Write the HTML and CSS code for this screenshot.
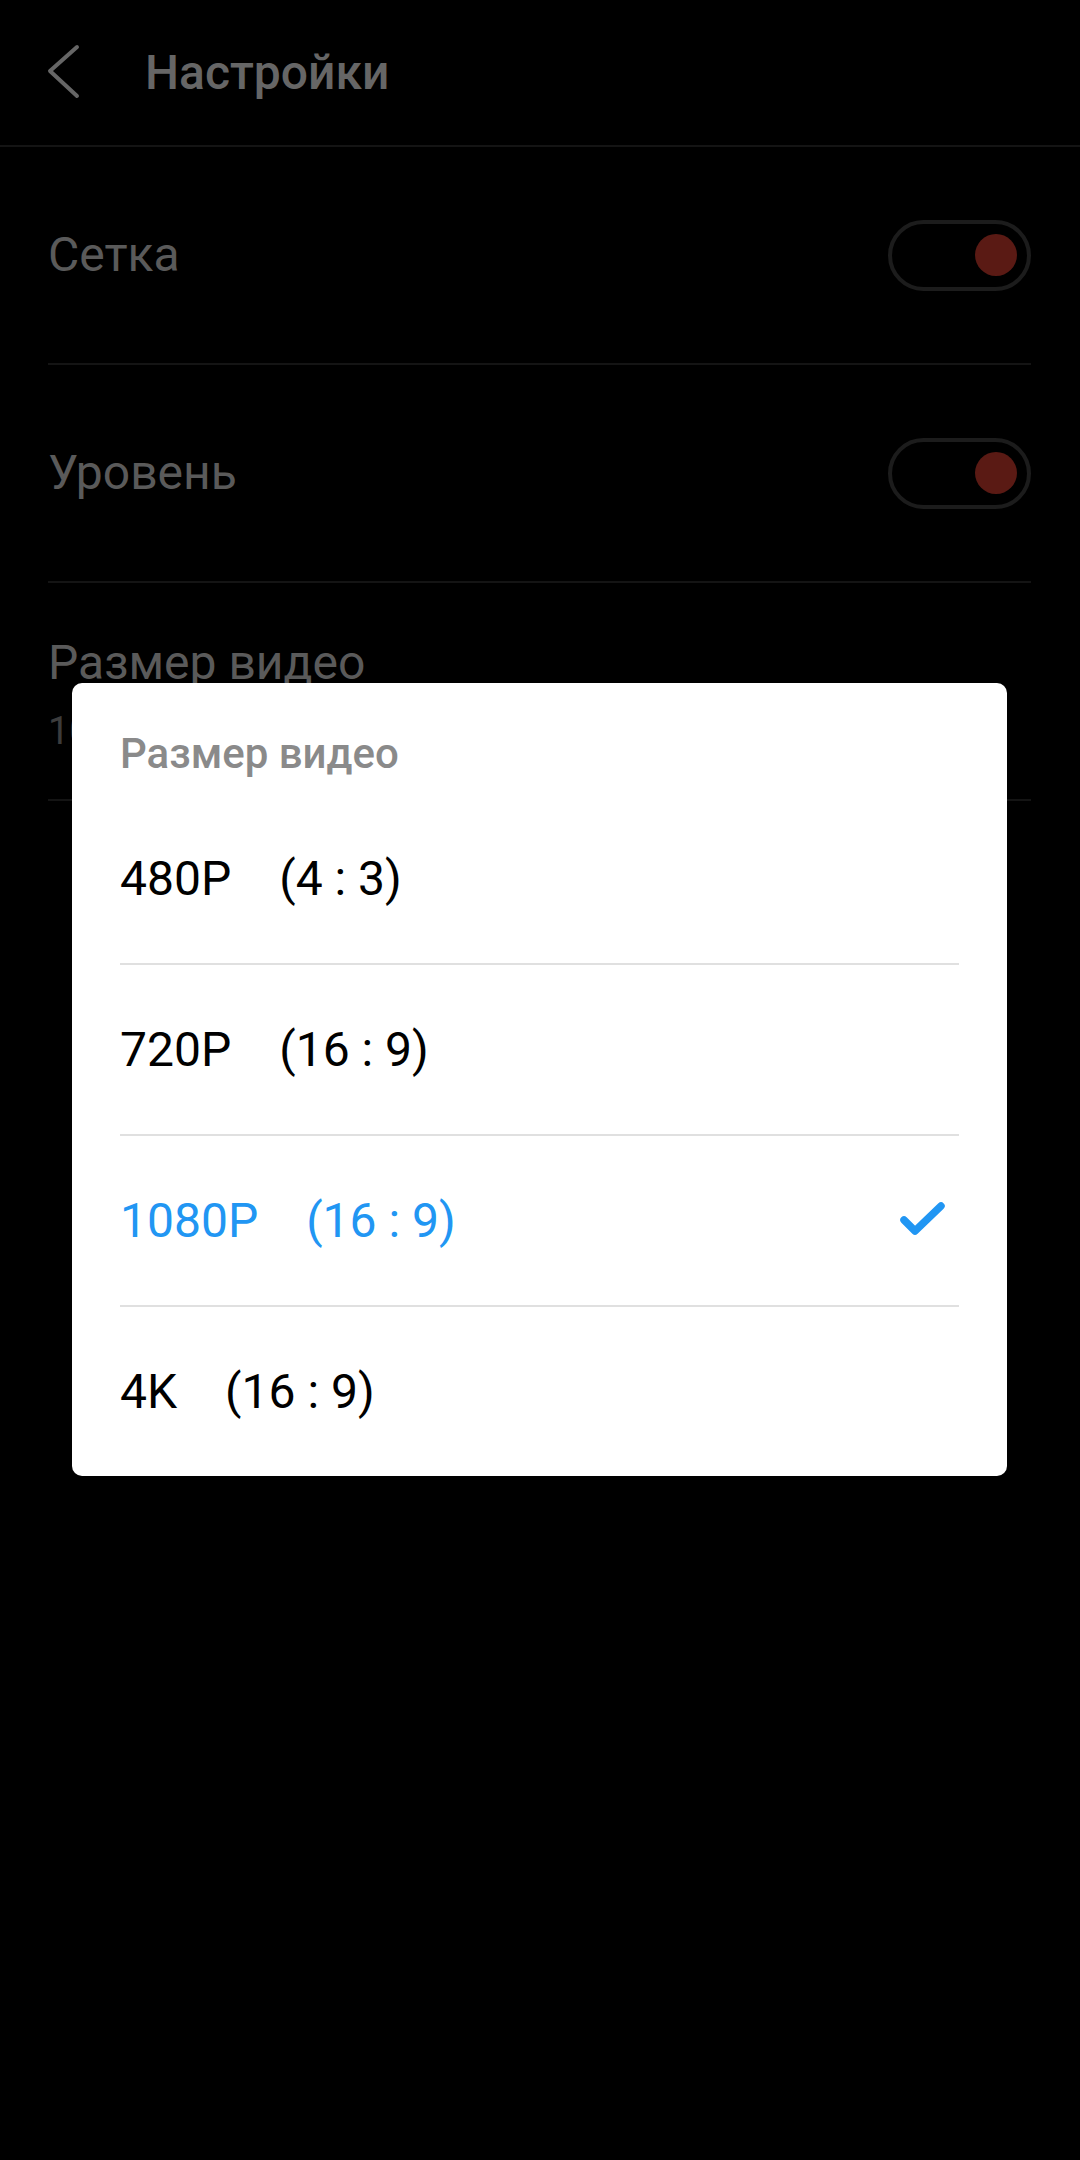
FILE: index.html
```html
<!DOCTYPE html>
<html lang="ru">
<head>
    <meta charset="UTF-8">
    <meta name="viewport" content="width=device-width, initial-scale=1.0">
    <title>Настройки</title>
    <link rel="stylesheet" href="styles.css">
</head>
<body>
    <div class="header">
        <button type="button" class="back">
            <svg width="40" height="60" viewBox="0 0 40 60">
                <polyline points="31,4 4,28 31,53" fill="none" stroke="#666" stroke-width="4" stroke-linecap="round" stroke-linejoin="round"/>
            </svg>
        </button>
        <h1>Настройки</h1>
    </div>

    <div class="settings">
        <div class="row">
            <span class="label">Сетка</span>
            <div class="toggle"><div class="knob"></div></div>
        </div>
        <div class="row">
            <span class="label">Уровень</span>
            <div class="toggle"><div class="knob"></div></div>
        </div>
        <div class="row row-two">
            <span class="label">Размер видео</span>
            <span class="value">1080P    (16 : 9)</span>
        </div>
    </div>

    <!-- диалог выбора размера видео -->
    <div class="dialog">
        <h2>Размер видео</h2>
        <ul class="options">
            <li><span class="res">480P</span><span>(4 : 3)</span></li>
            <li><span class="res">720P</span><span>(16 : 9)</span></li>
            <li class="selected">
                <span class="res">1080P</span><span>(16 : 9)</span>
                <svg class="check" width="48" height="40" viewBox="0 0 48 40">
                    <polyline points="5,19 16,30 42,5" fill="none" stroke="#2196f3" stroke-width="7.5" stroke-linecap="round" stroke-linejoin="round"/>
                </svg>
            </li>
            <li><span class="res">4K</span><span>(16 : 9)</span></li>
        </ul>
    </div>
</body>
</html>
```

FILE: styles.css
```css
body {
    font-family: Roboto, "Noto Sans", sans-serif;
    margin: 0;
    padding: 0;
    background-color: #000;
    width: 1080px;
    height: 2160px;
    position: relative;
    overflow: hidden;
}

.header {
    display: flex;
    align-items: center;
    height: 145px;
    border-bottom: 2px solid #141414;
}

.header .back {
    background: none;
    border: none;
    padding: 0;
    margin-left: 46px;
    width: 40px;
    height: 60px;
    display: flex;
}

.header h1 {
    margin: 0 0 0 59px;
    font-size: 48px;
    font-weight: 500;
    color: #666;
}

.settings {
    padding: 0 49px 0 48px;
}

.row {
    display: flex;
    align-items: center;
    justify-content: space-between;
    height: 216px;
    border-bottom: 2px solid #141414;
}

.row-two {
    box-sizing: border-box;
    height: 218px;
    flex-direction: column;
    align-items: flex-start;
    justify-content: flex-start;
    padding-top: 52px;
    gap: 18px;
}

.label {
    font-size: 48px;
    line-height: 56px;
    color: #5a5a5a;
}

.value {
    font-size: 38px;
    line-height: 44px;
    color: #3c3c3c;
    white-space: pre;
}

.toggle {
    box-sizing: border-box;
    width: 143px;
    height: 71px;
    border: 4px solid #1c1c1c;
    border-radius: 36px;
    display: flex;
    align-items: center;
    justify-content: flex-end;
    padding-right: 10px;
}

.knob {
    width: 42px;
    height: 42px;
    border-radius: 50%;
    background-color: #5a1a14;
}

.dialog {
    position: absolute;
    left: 72px;
    top: 683px;
    width: 935px;
    box-sizing: border-box;
    padding: 0 48px;
    background-color: #fff;
    border-radius: 10px;
}

.dialog h2 {
    margin: 0;
    height: 111px;
    padding-top: 30px;
    box-sizing: border-box;
    display: flex;
    align-items: center;
    font-size: 42px;
    font-weight: 500;
    color: #8a8a8a;
}

.options {
    list-style: none;
    margin: 0;
    padding: 0;
}

.options li {
    display: flex;
    align-items: center;
    height: 169px;
    border-bottom: 2px solid #e0e0e0;
    font-size: 48px;
    color: #000;
}

.options li:last-child {
    border-bottom: none;
}

.options .res {
    margin-right: 48px;
}

.options .selected {
    color: #2196f3;
}

.options .check {
    margin-left: auto;
    margin-right: 12px;
}
```
